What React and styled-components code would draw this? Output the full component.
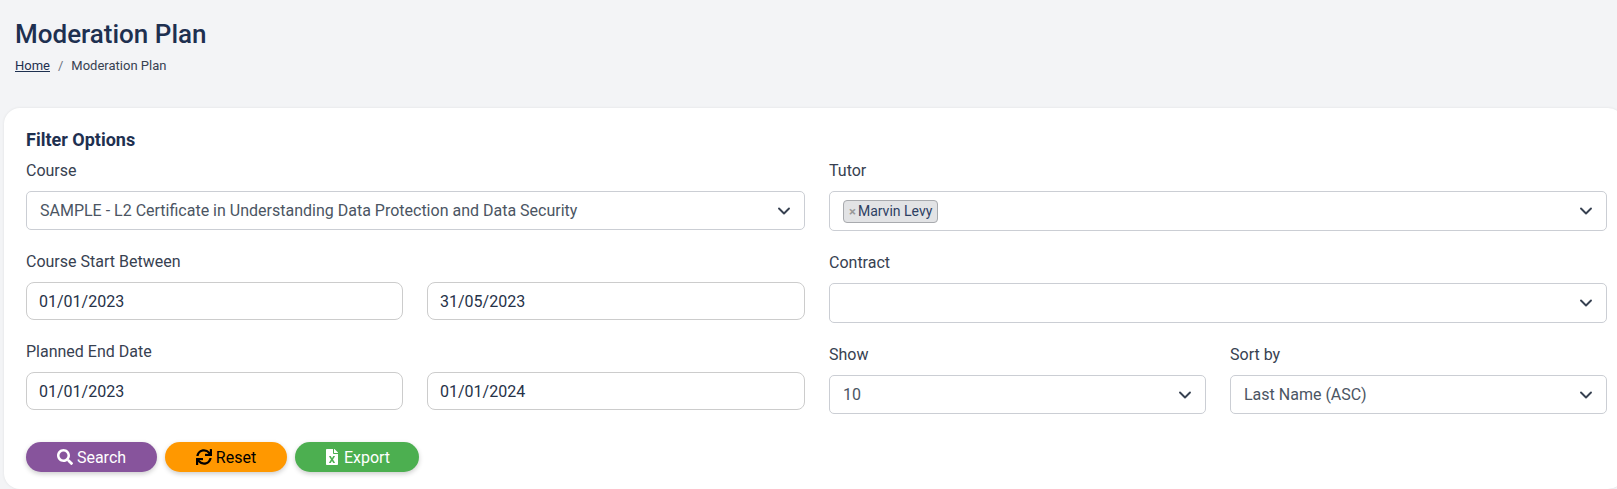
import React from "react";
import styled, { createGlobalStyle } from "styled-components";
import { FaSearch, FaSync, FaFileExcel } from "react-icons/fa";

const GlobalStyle = createGlobalStyle`
  html, body {
    margin: 0;
    padding: 0;
    height: 489px;
    overflow: hidden;
    background: #f3f4f6;
    font-family: Roboto, "Liberation Sans", sans-serif;
  }
`;

const Page = styled.div`
  width: 1617px;
  height: 489px;
  overflow: hidden;
`;

const Header = styled.header`
  height: 108px;
  padding: 18px 15px 0;
  box-sizing: border-box;
`;

const Title = styled.h1`
  margin: 0;
  font-size: 26px;
  line-height: 32px;
  font-weight: 500;
  color: #1e3050;
`;

const Crumbs = styled.nav`
  margin-top: 8px;
  display: flex;
  align-items: center;
  font-size: 13px;
  line-height: 16px;
  color: #374151;
`;

const CrumbLink = styled.a`
  color: #1e3050;
  text-decoration: underline;
`;

const CrumbSep = styled.span`
  margin: 0 8px;
  color: #6b7280;
`;

const Card = styled.section`
  margin-left: 4px;
  width: 1620px;
  height: 381px;
  box-sizing: border-box;
  padding: 20px 22px 0;
  background: #fff;
  border-radius: 16px;
  box-shadow: 0 0 3px rgba(0, 0, 0, 0.08);
`;

const CardTitle = styled.h2`
  margin: 0 0 7px;
  font-size: 18px;
  line-height: 24px;
  font-weight: 700;
  color: #1e3050;
`;

const Columns = styled.div`
  display: grid;
  grid-template-columns: 779px 778px;
  column-gap: 24px;
`;

const Column = styled.div`
  display: flex;
  flex-direction: column;
  gap: 20px;
`;

const Split = styled.div`
  display: grid;
  grid-template-columns: 377px 1fr;
  column-gap: 24px;
`;

const Field = styled.div`
  display: flex;
  flex-direction: column;
`;

const Label = styled.label`
  font-size: 16px;
  line-height: 24px;
  margin-bottom: 8px;
  color: #374151;
`;

const SelectBox = styled.div`
  height: ${(p) => p.$h || 39}px;
  box-sizing: border-box;
  padding: 0 13px;
  display: flex;
  align-items: center;
  justify-content: space-between;
  background: #fff;
  border: 1px solid #cbced4;
  border-radius: 5px;
  font-size: 16px;
  color: #4b5563;
`;

const DateInput = styled.div`
  height: 38px;
  box-sizing: border-box;
  padding: 0 12px;
  display: flex;
  align-items: center;
  background: #fff;
  border: 1px solid #ccc;
  border-radius: 8px;
  font-size: 16px;
  color: #263248;
`;

const Chevron = styled.svg`
  width: 14px;
  height: 14px;
  flex: none;
  fill: none;
  stroke: #374151;
  stroke-width: 1.9;
  stroke-linecap: round;
  stroke-linejoin: round;
`;

const Chip = styled.span`
  display: inline-flex;
  align-items: center;
  height: 23px;
  box-sizing: border-box;
  padding: 0 5px;
  gap: 2px;
  background: #e2e3e5;
  border: 1px solid #a8aaae;
  border-radius: 4px;
  font-size: 14px;
  color: #2d3f63;
`;

const ChipX = styled.span`
  font-size: 13px;
  font-weight: 700;
  color: #999;
`;

const Buttons = styled.div`
  margin-top: 28px;
  display: flex;
  gap: 8px;
`;

const Button = styled.button`
  height: 30px;
  width: ${(p) => p.$w}px;
  padding: 0;
  display: inline-flex;
  align-items: center;
  justify-content: center;
  gap: 4px;
  border: 0;
  border-radius: 15px;
  background: ${(p) => p.$bg};
  color: ${(p) => p.$fg || "#fff"};
  font-family: inherit;
  font-size: 16px;
  box-shadow: 0 2px 5px rgba(0, 0, 0, 0.2);
`;

const Select = ({ h, children }) => (
  <SelectBox $h={h}>
    <span>{children}</span>
    <Chevron viewBox="0 0 14 14">
      <path d="M2 4.5 7 9.5 12 4.5" />
    </Chevron>
  </SelectBox>
);

const App = () => (
  <Page>
    <GlobalStyle />
    <Header>
      <Title>Moderation Plan</Title>
      <Crumbs>
        <CrumbLink>Home</CrumbLink>
        <CrumbSep>/</CrumbSep>
        <span>Moderation Plan</span>
      </Crumbs>
    </Header>
    <Card>
      <CardTitle>Filter Options</CardTitle>
      <Columns>
        <Column>
          <Field>
            <Label>Course</Label>
            <Select>SAMPLE - L2 Certificate in Understanding Data Protection and Data Security</Select>
          </Field>
          <Field>
            <Label>Course Start Between</Label>
            <Split>
              <DateInput>01/01/2023</DateInput>
              <DateInput>31/05/2023</DateInput>
            </Split>
          </Field>
          <Field>
            <Label>Planned End Date</Label>
            <Split>
              <DateInput>01/01/2023</DateInput>
              <DateInput>01/01/2024</DateInput>
            </Split>
          </Field>
        </Column>
        <Column>
          <Field>
            <Label>Tutor</Label>
            <Select h={40}>
              <Chip>
                <ChipX>×</ChipX>Marvin Levy
              </Chip>
            </Select>
          </Field>
          <Field>
            <Label>Contract</Label>
            <Select h={40} />
          </Field>
          <Split>
            <Field>
              <Label>Show</Label>
              <Select>10</Select>
            </Field>
            <Field>
              <Label>Sort by</Label>
              <Select>Last Name (ASC)</Select>
            </Field>
          </Split>
        </Column>
      </Columns>
      <Buttons>
        <Button $w={131} $bg="#87549c">
          <FaSearch size={16} />
          Search
        </Button>
        <Button $w={122} $bg="#ff9800" $fg="#000">
          <FaSync size={16} />
          Reset
        </Button>
        <Button $w={124} $bg="#4caf50">
          <FaFileExcel size={16} />
          Export
        </Button>
      </Buttons>
    </Card>
  </Page>
);

export default App;
